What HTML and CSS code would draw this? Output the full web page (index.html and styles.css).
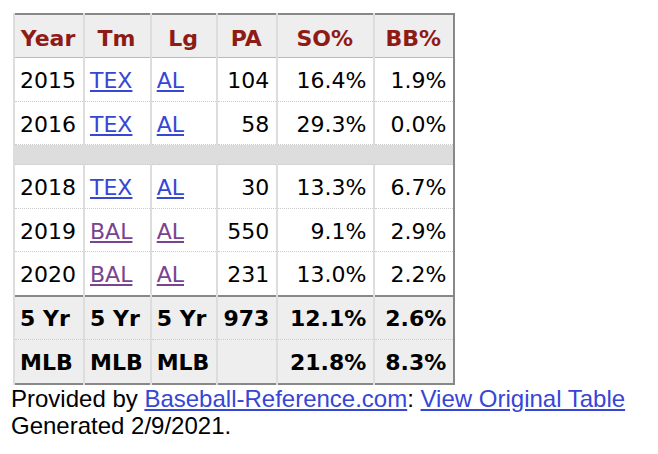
FILE: index.html
```html
<!DOCTYPE html>
<html>
<head>
    <meta charset="UTF-8">
    <title>Stats Table</title>
    <link rel="stylesheet" href="styles.css">
</head>
<body>

<table class="stats">
    <thead>
        <tr>
            <th>Year</th>
            <th>Tm</th>
            <th>Lg</th>
            <th class="num">PA</th>
            <th class="num so">SO%</th>
            <th class="num bb">BB%</th>
        </tr>
    </thead>
    <tbody>
        <tr>
            <td>2015</td>
            <td><a href="#">TEX</a></td>
            <td><a href="#">AL</a></td>
            <td class="num">104</td>
            <td class="num">16.4%</td>
            <td class="num">1.9%</td>
        </tr>
        <tr>
            <td>2016</td>
            <td><a href="#">TEX</a></td>
            <td><a href="#">AL</a></td>
            <td class="num">58</td>
            <td class="num">29.3%</td>
            <td class="num">0.0%</td>
        </tr>
        <tr class="spacer">
            <td colspan="6"></td>
        </tr>
        <tr>
            <td>2018</td>
            <td><a href="#">TEX</a></td>
            <td><a href="#">AL</a></td>
            <td class="num">30</td>
            <td class="num">13.3%</td>
            <td class="num">6.7%</td>
        </tr>
        <tr>
            <td>2019</td>
            <td><a href="#" class="visited">BAL</a></td>
            <td><a href="#" class="visited">AL</a></td>
            <td class="num">550</td>
            <td class="num">9.1%</td>
            <td class="num">2.9%</td>
        </tr>
        <tr>
            <td>2020</td>
            <td><a href="#" class="visited">BAL</a></td>
            <td><a href="#" class="visited">AL</a></td>
            <td class="num">231</td>
            <td class="num">13.0%</td>
            <td class="num">2.2%</td>
        </tr>
    </tbody>
    <tfoot>
        <tr class="first-total">
            <td>5 Yr</td>
            <td>5 Yr</td>
            <td>5 Yr</td>
            <td class="num">973</td>
            <td class="num">12.1%</td>
            <td class="num">2.6%</td>
        </tr>
        <tr>
            <td>MLB</td>
            <td>MLB</td>
            <td>MLB</td>
            <td class="num"></td>
            <td class="num">21.8%</td>
            <td class="num">8.3%</td>
        </tr>
    </tfoot>
</table>

<div class="credit">
    Provided by <a href="#">Baseball-Reference.com</a>: <a href="#">View Original Table</a><br>
    Generated 2/9/2021.
</div>

</body>
</html>
```

FILE: styles.css
```css
body {
    margin: 0;
    padding: 13px 0 0 13px;
    font-family: "DejaVu Sans", Verdana, sans-serif;
}
.stats {
    border-collapse: collapse;
    border: 2px solid #888;
    font-size: 22px;
}
.stats th,
.stats td {
    padding: 10px 7px 7.5px 5px;
    border-left: 2px solid #ddd;
    border-top: 1px dotted #ccc;
    text-align: left;
    white-space: nowrap;
    line-height: 25px;
}
.stats th {
    padding: 10.5px 7px 6.5px 5px;
    background-color: #eee;
    color: #8e1b15;
    font-weight: bold;
    text-align: center;
    border-top: none;
    border-bottom: 1px solid #bbb;
}
.stats th.so {
    width: 83px;
}
.stats th.bb {
    width: 66px;
}
.stats .num {
    text-align: right;
}
.stats th.num {
    text-align: center;
}
.stats a {
    color: #3646d5;
}
.stats a.visited {
    color: #7a438f;
}
.spacer td {
    height: 19px;
    padding: 0;
    background-color: #ddd;
    border-top: 1px dotted #ccc;
}
.stats tfoot td {
    padding: 9.5px 7px 8px 5px;
    background-color: #eee;
    font-weight: bold;
}
.stats tfoot .first-total td {
    border-top: 2px solid #888;
}
.credit {
    font-family: "Liberation Sans", Arial, sans-serif;
    font-size: 24px;
    line-height: 27px;
    margin-left: -2px;
}
.credit a {
    color: #3646d5;
}
```
